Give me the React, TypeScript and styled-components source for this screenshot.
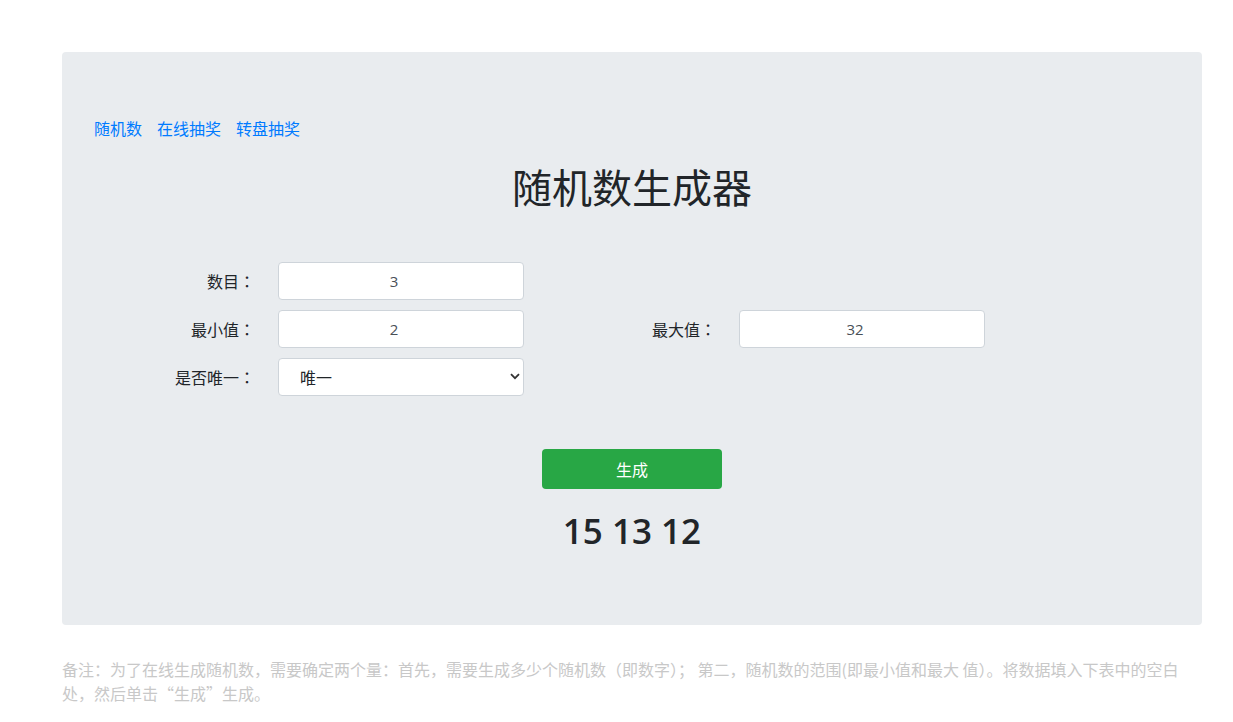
import { FC, useState } from "react";
import styled, { createGlobalStyle } from "styled-components";

const GlobalStyle = createGlobalStyle`
  html, body {
    margin: 0;
    padding: 0;
    background: #fff;
  }
  body {
    font-family: "Noto Sans CJK SC", "Noto Sans", sans-serif;
    font-size: 16px;
    line-height: 1.5;
    color: #212529;
  }
  * {
    box-sizing: border-box;
  }
`;

const Page = styled.div`
  width: 1140px;
  margin: 52px 0 0 62px;
`;

const Jumbotron = styled.div`
  background: #e9ecef;
  border-radius: 4px;
  padding: 64px 32px 70px;
`;

const Nav = styled.nav`
  display: flex;
  gap: 15px;
`;

const NavLink = styled.a`
  color: #007bff;
  text-decoration: none;
  font-size: 16px;
  line-height: 24px;
  cursor: pointer;
`;

const Title = styled.h1`
  margin: 22px 0 0;
  text-align: center;
  font-size: 40px;
  font-weight: 400;
  line-height: 48px;
`;

const Form = styled.form`
  margin-top: 52px;
  display: grid;
  grid-template-columns: 184px 246px 215px 246px;
  row-gap: 10px;
  align-items: center;
`;

const Label = styled.label`
  text-align: right;
  padding-right: 23px;
  font-size: 16px;
  line-height: 24px;
  white-space: nowrap;
`;

// centred full-width colon, as in the TC glyph set
const Colon = styled.span`
  font-family: "Noto Sans CJK TC", sans-serif;
`;

const Input = styled.input`
  width: 100%;
  height: 38px;
  border: 1px solid #ced4da;
  border-radius: 4px;
  background: #fff;
  color: #495057;
  font-family: "Open Sans", "Noto Sans", sans-serif;
  font-size: 15px;
  text-align: center;
  padding: 0 14px 0 0;
  outline: none;
`;

const SelectWrap = styled.div`
  position: relative;
  height: 38px;
`;

const Select = styled.select`
  appearance: none;
  width: 100%;
  height: 38px;
  border: 1px solid #ced4da;
  border-radius: 4px;
  background: #fff;
  color: #212529;
  font-family: "Noto Sans CJK SC", sans-serif;
  font-size: 16px;
  padding: 0 0 0 21px;
  outline: none;
`;

const Chevron = styled.svg`
  position: absolute;
  right: 4px;
  top: 15px;
  pointer-events: none;
`;

const Actions = styled.div`
  margin-top: 53px;
  display: flex;
  flex-direction: column;
  align-items: center;
`;

const Button = styled.button`
  width: 180px;
  height: 40px;
  border: none;
  border-radius: 4px;
  background: #28a745;
  color: #fff;
  font-family: "Noto Sans CJK SC", sans-serif;
  font-size: 16px;
  cursor: pointer;
`;

const Result = styled.div`
  margin-top: 18px;
  font-family: "Open Sans", "Noto Sans", sans-serif;
  font-size: 35px;
  font-weight: 600;
  line-height: 48px;
  color: #212529;
`;

const Note = styled.p`
  margin: 32px 0 0;
  color: #c8c8c8;
  font-size: 16px;
  line-height: 24px;
`;

const App: FC = () => {
  const [count, setCount] = useState("3");
  const [min, setMin] = useState("2");
  const [max, setMax] = useState("32");
  const [unique, setUnique] = useState("1");
  const [result, setResult] = useState<number[]>([15, 13, 12]);

  const generate = () => {
    const n = parseInt(count) || 0;
    const lo = parseInt(min) || 0;
    const hi = parseInt(max) || 0;
    const out: number[] = [];
    let guard = 0;
    while (out.length < n && guard < 10000) {
      guard++;
      const v = lo + Math.floor(Math.random() * (hi - lo + 1));
      if (unique === "1" && out.includes(v)) continue;
      out.push(v);
    }
    setResult(out);
  };

  return (
    <>
      <GlobalStyle />
      <Page>
        <Jumbotron>
          <Nav>
            <NavLink>随机数</NavLink>
            <NavLink>在线抽奖</NavLink>
            <NavLink>转盘抽奖</NavLink>
          </Nav>
          <Title>随机数生成器</Title>

          <Form onSubmit={(e) => e.preventDefault()}>
            <Label>数目<Colon>：</Colon></Label>
            <Input value={count} onChange={(e) => setCount(e.target.value)} />
            <div />
            <div />

            <Label>最小值<Colon>：</Colon></Label>
            <Input value={min} onChange={(e) => setMin(e.target.value)} />
            <Label>最大值<Colon>：</Colon></Label>
            <Input value={max} onChange={(e) => setMax(e.target.value)} />

            <Label>是否唯一<Colon>：</Colon></Label>
            <SelectWrap>
              <Select value={unique} onChange={(e) => setUnique(e.target.value)}>
                <option value="1">唯一</option>
                <option value="0">不唯一</option>
              </Select>
              <Chevron width="10" height="7" viewBox="0 0 10 7">
                <path d="M1 1.2 L5 5.2 L9 1.2" fill="none" stroke="#333" strokeWidth="1.8" />
              </Chevron>
            </SelectWrap>
            <div />
            <div />
          </Form>

          <Actions>
            <Button type="button" onClick={generate}>生成</Button>
            <Result>{result.join(" ")}</Result>
          </Actions>
        </Jumbotron>

        <Note>
          备注：为了在线生成随机数，需要确定两个量：首先，需要生成多少个随机数（即数字）； 第二，随机数的范围(即最小值和最大 值）。将数据填入下表中的空白处，然后单击“生成”生成。
        </Note>
      </Page>
    </>
  );
};

export default App;
